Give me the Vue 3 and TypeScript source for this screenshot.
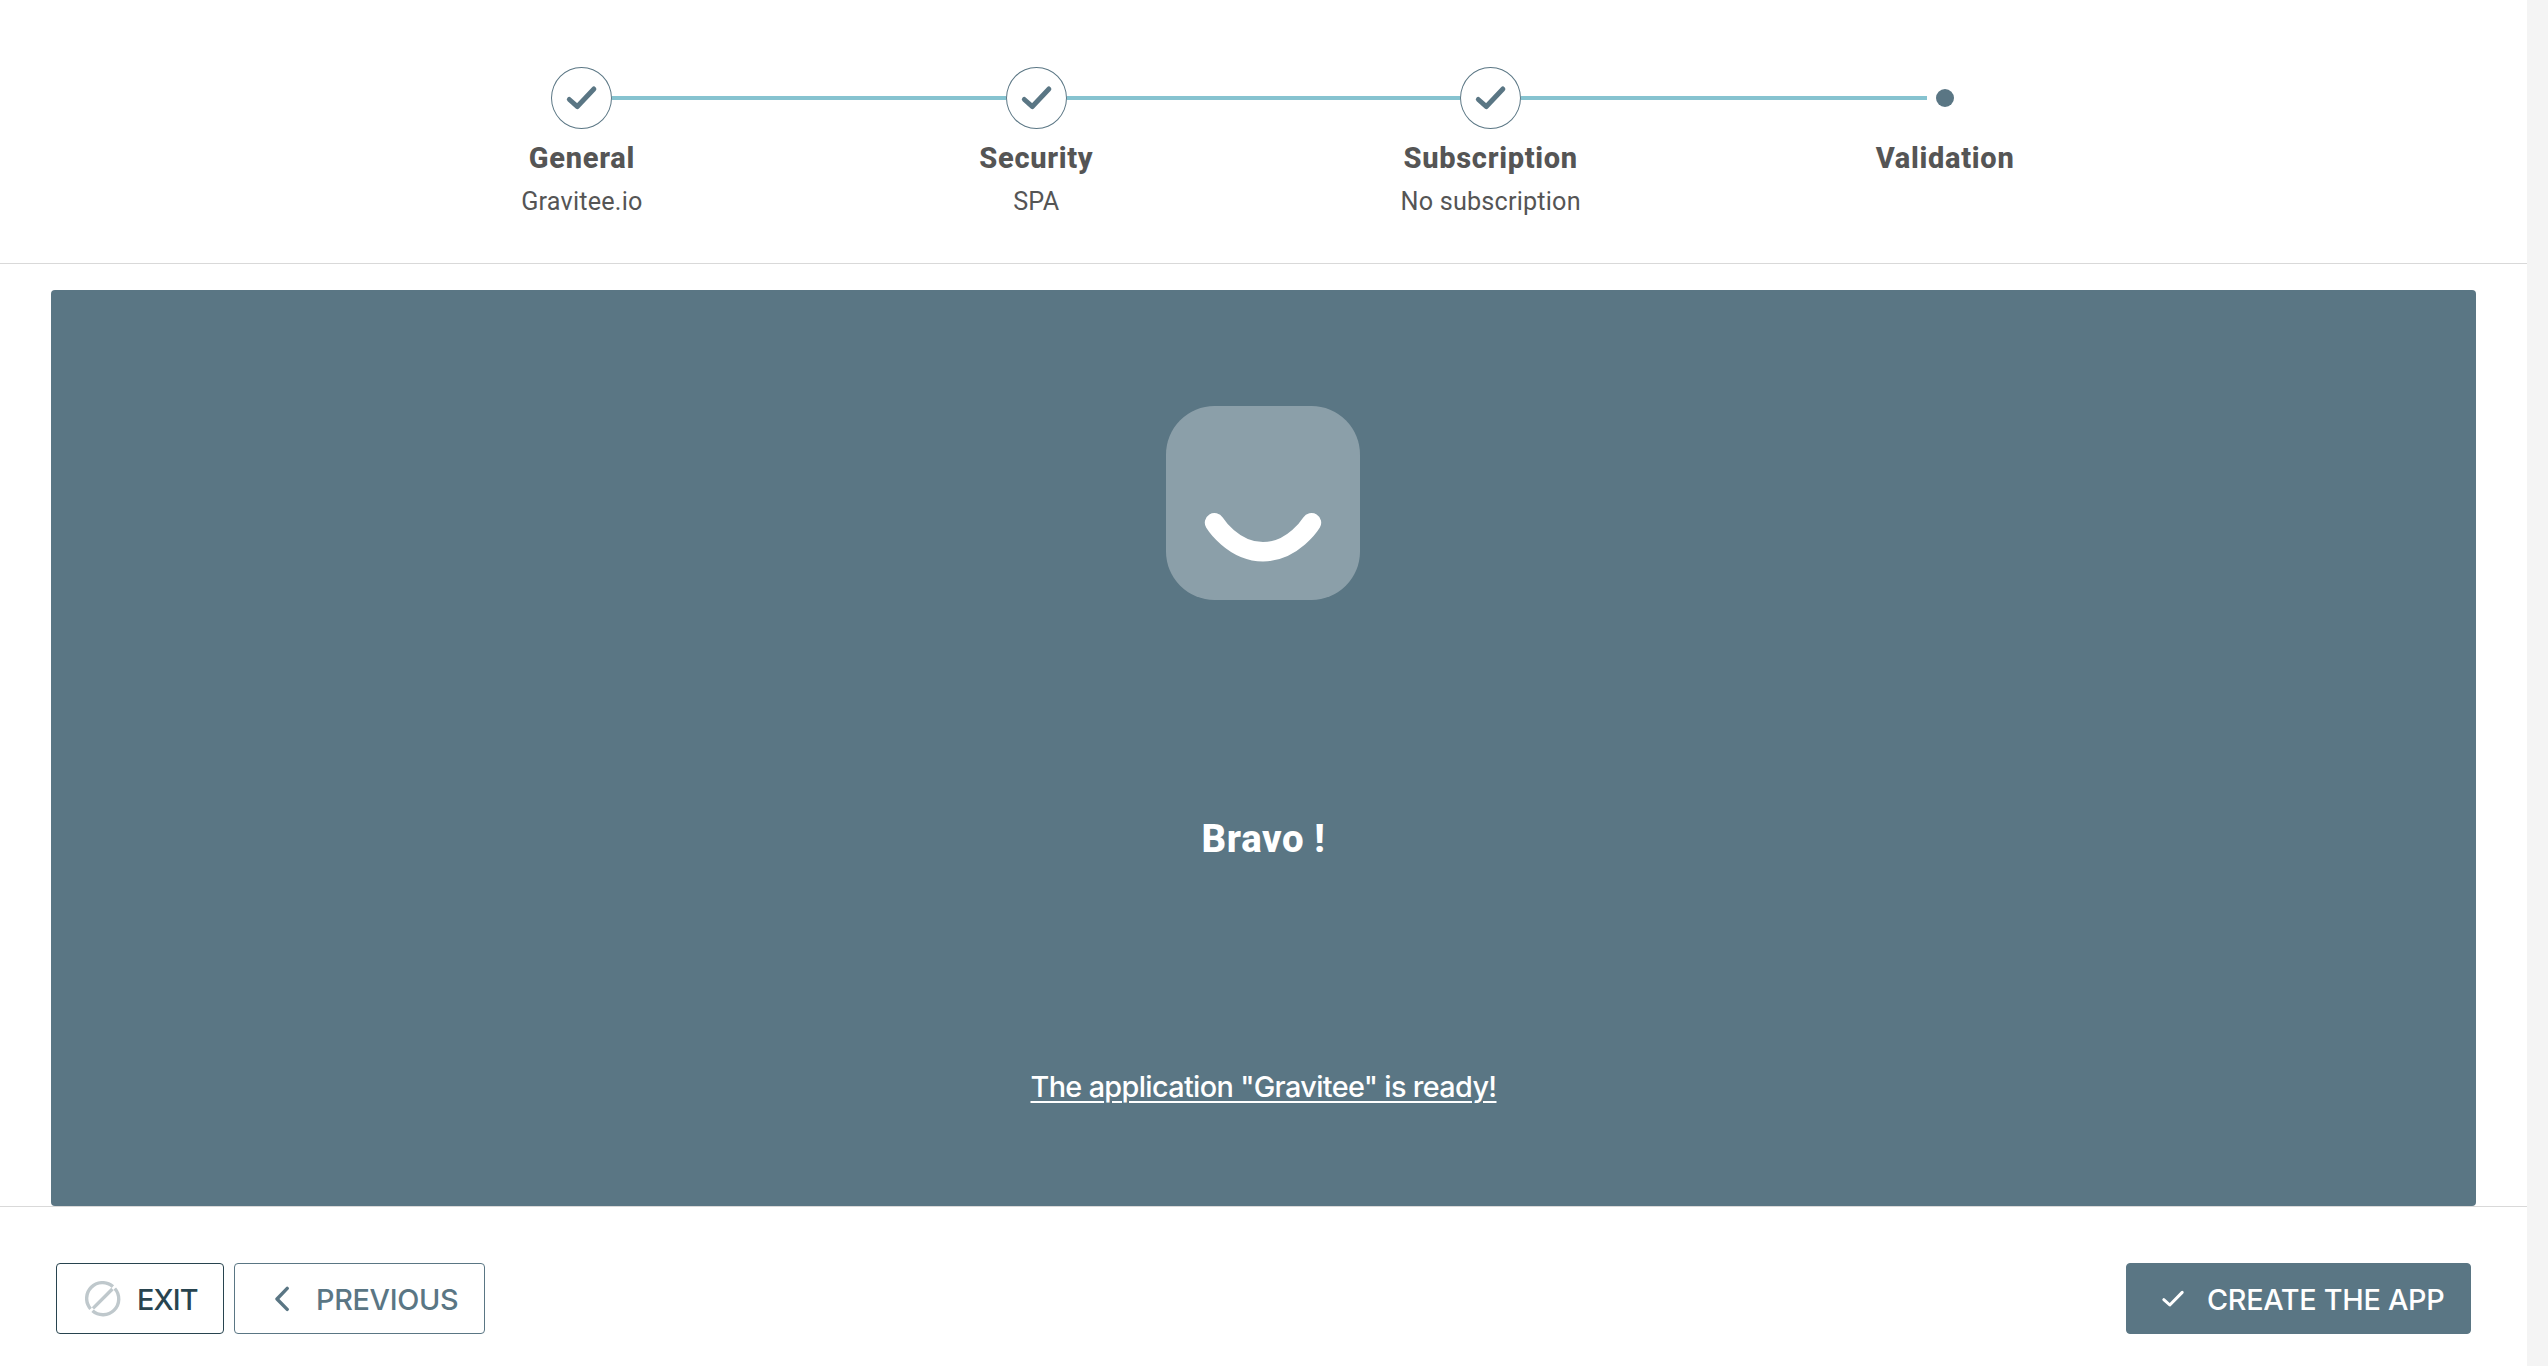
<script setup lang="ts">
interface Step {
  title: string
  description?: string
  done: boolean
}

const steps: Step[] = [
  { title: 'General', description: 'Gravitee.io', done: true },
  { title: 'Security', description: 'SPA', done: true },
  { title: 'Subscription', description: 'No subscription', done: true },
  { title: 'Validation', done: false },
]
</script>

<template>
  <div class="page">
    <main class="creation">
      <header class="stepper">
        <div v-for="(step, i) in steps" :key="step.title" class="step">
          <div class="track">
            <span class="line" :class="{ hidden: i === 0 }"></span>
            <span v-if="step.done" class="bubble">
              <svg width="60" height="60" viewBox="0 0 60 60" fill="none">
                <path d="M17.6 31.5 L25.8 38.7 L42.6 20.8" stroke="#5a7684" stroke-width="5" stroke-linecap="round" stroke-linejoin="round" />
              </svg>
            </span>
            <span v-else class="dot"></span>
            <span class="line" :class="{ hidden: i === steps.length - 1 }"></span>
          </div>
          <div class="title">{{ step.title }}</div>
          <div class="description">{{ step.description }}</div>
        </div>
      </header>

      <section class="panel">
        <svg class="smile" width="194" height="194" viewBox="0 0 40 40" fill="none">
          <rect width="40" height="40" rx="10" fill="#fff" fill-opacity=".3" />
          <path d="M10 24.05C10 24.05 13.75 30.05 20 30.05C26.25 30.05 30 24.05 30 24.05" stroke="#fff" stroke-width="4" stroke-linecap="round" />
        </svg>
        <h1 class="bravo">Bravo !</h1>
        <a class="ready">The application "Gravitee" is ready!</a>
      </section>

      <footer class="actions">
        <button class="btn exit">
          <svg width="36" height="36" viewBox="0 0 36 36" fill="none" stroke="#bfc8cc" stroke-width="3.4">
            <path d="M27.9 5.6 A15.8 15.8 0 0 0 5.6 27.9" />
            <path d="M29.8 7.5 A15.8 15.8 0 0 1 7.5 29.8" />
            <path d="M8 27.4 L27.4 8" />
          </svg>
          <span>EXIT</span>
        </button>
        <button class="btn previous">
          <svg width="16" height="26" viewBox="0 0 16 26" fill="none">
            <path d="M13.2 2.4 L3 13 L13.2 23.4" stroke="#5a7684" stroke-width="3.4" stroke-linecap="round" stroke-linejoin="round" />
          </svg>
          <span>PREVIOUS</span>
        </button>
        <button class="btn create">
          <svg width="24" height="20" viewBox="0 0 24 20" fill="none">
            <path d="M2.8 10.7 L8.8 16 L21.2 3.4" stroke="#fff" stroke-width="3" stroke-linecap="round" stroke-linejoin="round" />
          </svg>
          <span>CREATE THE APP</span>
        </button>
      </footer>
    </main>
  </div>
</template>

<style>
body {
  margin: 0;
  background: #f4f4f4;
}
</style>

<style scoped>
.page {
  height: 1366px;
  background: #f4f4f4;
  overflow: hidden;
}
.creation {
  width: 2527px;
  height: 1366px;
  background: #fff;
  display: flex;
  flex-direction: column;
}
.stepper {
  height: 263px;
  border-bottom: 1px solid #d9d9d9;
  display: flex;
  justify-content: center;
  box-sizing: content-box;
}
.step {
  width: 454.4px;
  padding-top: 67px;
  text-align: center;
  color: #555;
  font-family: Roboto, sans-serif;
}
.track {
  display: flex;
  align-items: center;
  height: 62px;
}
.line {
  flex: 1;
  height: 4px;
  background: #86c3d0;
}
.line.hidden {
  background: none;
}
.bubble {
  width: 61px;
  height: 62px;
  box-sizing: border-box;
  border: 1px solid #5a7684;
  border-radius: 50%;
  display: flex;
}
.dot {
  width: 18px;
  height: 18px;
  margin: 0 9px;
  border-radius: 50%;
  background: #5a7684;
}
.title {
  margin-top: 12px;
  font-size: 29px;
  line-height: 34px;
  font-weight: 800;
  letter-spacing: 0.7px;
}
.description {
  margin-top: 10px;
  font-size: 25.2px;
  line-height: 34px;
  letter-spacing: 0.2px;
}
.panel {
  margin: 26px 51px 0;
  height: 916px;
  border-radius: 4px;
  background: #5a7684;
  color: #fff;
  display: flex;
  flex-direction: column;
  align-items: center;
}
.smile {
  margin: 116px 1px 0 0;
}
.bravo {
  margin: 215px 0 0;
  font: 800 38.4px/48px Roboto, sans-serif;
  letter-spacing: 0.6px;
}
.ready {
  margin-top: 206px;
  font: 500 28.8px/36px Inter, sans-serif;
  letter-spacing: -0.64px;
  text-decoration: underline;
  text-decoration-thickness: 2px;
  text-underline-offset: 4px;
}
.actions {
  flex: 1;
  border-top: 1px solid #d9d9d9;
  padding: 56px 56px 0;
  display: flex;
  align-items: flex-start;
  gap: 10px;
}
.btn {
  height: 71px;
  box-sizing: border-box;
  padding: 0;
  border: 1px solid #5a7684;
  border-radius: 4px;
  background: #fff;
  color: #5a7684;
  font: 500 28.8px/36px Inter, sans-serif;
  letter-spacing: -0.3px;
  display: flex;
  align-items: center;
  white-space: nowrap;
}
.btn span {
  padding-top: 2px;
}
.exit {
  width: 168px;
  padding-left: 28px;
  gap: 16px;
  border-color: #28444f;
  color: #28444f;
  letter-spacing: -0.9px;
}
.previous {
  width: 251px;
  padding-left: 39px;
  gap: 26px;
}
.create {
  width: 345px;
  margin-left: auto;
  padding-left: 34px;
  gap: 22px;
  background: #5a7684;
  color: #fff;
}
</style>
